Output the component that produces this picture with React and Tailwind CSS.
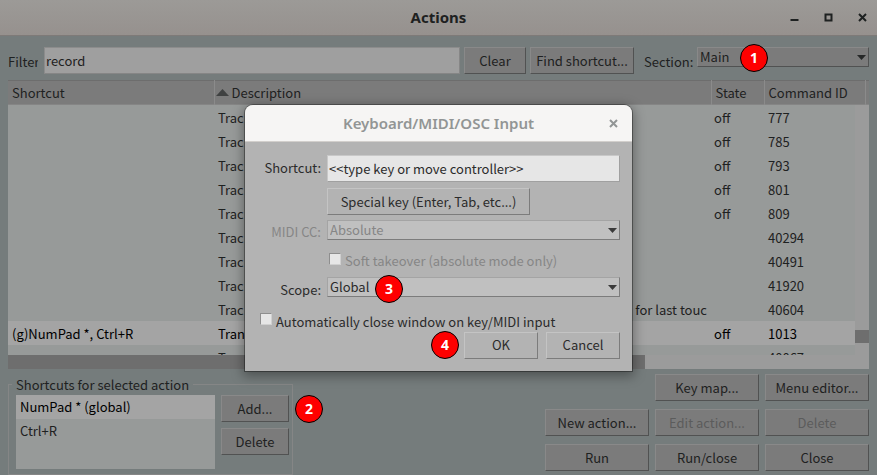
import React from "react";

const FACE =
  "border border-t-[#898989] border-l-[#898989] border-r-[#515252] border-b-[#515252] bg-[#7b7b7b]";

const ROWS = [
  { text: "Trac", state: "off", id: "777" },
  { text: "Trac", state: "off", id: "785" },
  { text: "Trac", state: "off", id: "793" },
  { text: "Trac", state: "off", id: "801" },
  { text: "Trac", state: "off", id: "809" },
  { text: "Trac", id: "40294" },
  { text: "Trac", id: "40491" },
  { text: "Trac", id: "41920" },
  { text: "Trac", tail: "for last touc", id: "40604" },
  { keys: "(g)NumPad *, Ctrl+R", text: "Tran", state: "off", id: "1013", selected: true },
  { text: "Trac", id: "40067" },
];

function Button({ children, className = "", disabled = false }) {
  return (
    <button
      type="button"
      disabled={disabled}
      className={`h-[27px] shrink-0 whitespace-nowrap ${FACE} ${disabled ? "text-[#5b5c5c]" : "text-[#1e2121]"} ${className}`}
    >
      {children}
    </button>
  );
}

function DialogButton({ children, className = "" }) {
  return (
    <button
      type="button"
      className={`h-[27px] whitespace-nowrap border border-t-[#c4c4c4] border-l-[#c4c4c4] border-r-[#7c7c7c] border-b-[#7c7c7c] bg-[#b3b3b3] text-[#2b2b2b] ${className}`}
    >
      {children}
    </button>
  );
}

function Arrow({ className }) {
  return (
    <svg className={`pointer-events-none absolute right-[3px] top-2 ${className}`} width="9" height="5" viewBox="0 0 9 5" aria-hidden="true">
      <path d="M0 0H9L4.5 5Z" fill="currentColor" />
    </svg>
  );
}

function Badge({ n, className = "" }) {
  return (
    <span
      className={`flex size-7 shrink-0 items-center justify-center rounded-full border border-black bg-[#fe0000] font-['Noto_Sans','Open_Sans',sans-serif] text-sm leading-none font-bold text-white ${className}`}
    >
      {n}
    </span>
  );
}

function DialogSelect({ id, value, disabled = false }) {
  return (
    <>
      <select
        id={id}
        disabled={disabled}
        className={`block h-5 w-full appearance-none border border-t-[#a4a4a4] border-l-[#a4a4a4] border-r-[#7c7c7c] border-b-[#7c7c7c] bg-[#c0c0c0] pl-[2px] leading-[18px] opacity-100 ${disabled ? "text-[#868686]" : "text-[#2b2b2b]"}`}
      >
        <option>{value}</option>
      </select>
      <Arrow className="text-[#3a3a3a]" />
    </>
  );
}

function Check({ id }) {
  return (
    <input
      id={id}
      type="checkbox"
      className="size-3 shrink-0 appearance-none border border-t-[#8e8e8e] border-l-[#8e8e8e] border-r-[#d0d0d0] border-b-[#d0d0d0] bg-[#e6e6e6]"
    />
  );
}

function InputDialog() {
  return (
    <div
      role="dialog"
      aria-labelledby="dialog-title"
      className="absolute inset-x-0 top-[105px] mx-auto w-[387px] rounded-t-lg bg-[#b3b3b3] text-[#2b2b2b] shadow-[0_0_0_1px_rgba(0,0,0,0.35),0_3px_12px_2px_rgba(0,0,0,0.35)]"
    >
      <header className="relative flex h-[37px] items-center justify-center rounded-t-lg border-b border-[#d2cfcc] bg-[#f6f5f4] font-['Noto_Sans','Open_Sans',sans-serif] text-[#929595]">
        <h2 id="dialog-title" className="text-[15px] font-semibold">
          Keyboard/MIDI/OSC Input
        </h2>
        <button type="button" aria-label="Close dialog" className="absolute right-[14px]">
          <svg width="9" height="9" viewBox="0 0 9 9" aria-hidden="true">
            <path d="M1 1L8 8M8 1L1 8" stroke="currentColor" strokeWidth="2" />
          </svg>
        </button>
      </header>
      <div className="px-3 pt-[13px] pb-3">
        <div className="flex">
          <label htmlFor="shortcut" className="w-16 pt-[3px] text-right leading-5">
            Shortcut:
          </label>
          <input
            id="shortcut"
            defaultValue="<<type key or move controller>>"
            className="ml-[6px] h-[27px] min-w-0 flex-1 border border-t-[#c8c8c8] border-l-[#c8c8c8] border-r-[#a0a0a0] border-b-[#a0a0a0] bg-[#e6e6e6] px-px"
          />
        </div>
        <DialogButton className="mt-[6px] ml-[70px] block w-[203px]">Special key (Enter, Tab, etc...)</DialogButton>
        <div className="mt-[5px] flex">
          <label htmlFor="midi-cc" className="h-5 w-16 pt-[2px] text-right leading-5 text-[#868686]">
            MIDI CC:
          </label>
          <div className="relative ml-[6px] flex-1">
            <DialogSelect id="midi-cc" value="Absolute" disabled />
          </div>
        </div>
        <div className="mt-[13px] ml-[72px] flex h-5 gap-1 text-[#868686]">
          <Check id="soft" />
          <label htmlFor="soft" className="leading-4">
            Soft takeover (absolute mode only)
          </label>
        </div>
        <div className="mt-1 flex">
          <label htmlFor="scope" className="h-5 w-16 overflow-hidden pt-[3px] text-right leading-5">
            Scope:
          </label>
          <div className="relative ml-[6px] flex-1">
            <DialogSelect id="scope" value="Global" />
            <Badge n="3" className="absolute -top-[2px] left-[48px]" />
          </div>
        </div>
        <div className="mt-4 ml-[3px] flex h-[18px] gap-1">
          <Check id="auto-close" />
          <label htmlFor="auto-close" className="leading-[18px]">
            Automatically close window on key/MIDI input
          </label>
        </div>
        <div className="flex items-center justify-end gap-2">
          <Badge n="4" className="-mr-[3px]" />
          <DialogButton className="w-[74px]">OK</DialogButton>
          <DialogButton className="w-[74px]">Cancel</DialogButton>
        </div>
      </div>
    </div>
  );
}

export default function App() {
  return (
    <div className="relative flex h-screen flex-col overflow-hidden bg-[#757c7c] font-['Noto_Sans_CJK_SC',sans-serif] text-[13px] text-[#1e2121]">
      <header className="relative flex h-9 shrink-0 items-center justify-center border-b border-[#7e7a78] bg-linear-to-b from-[#9c9a97] to-[#96918e]">
        <h1 className="font-['Noto_Sans','Open_Sans',sans-serif] text-[15px] font-bold">Actions</h1>
        <div className="absolute right-[10px] flex items-center gap-[25px]">
          <button type="button" aria-label="Minimize">
            <svg width="9" height="9" viewBox="0 0 9 9" aria-hidden="true">
              <path d="M0.5 7H8.5" stroke="currentColor" strokeWidth="2" />
            </svg>
          </button>
          <button type="button" aria-label="Maximize">
            <svg width="9" height="9" viewBox="0 0 9 9" aria-hidden="true">
              <path d="M0.5 0.5H8.5V8.5H0.5Z M2.5 2.5V6.5H6.5V2.5Z" fill="currentColor" fillRule="evenodd" />
            </svg>
          </button>
          <button type="button" aria-label="Close window">
            <svg width="9" height="9" viewBox="0 0 9 9" aria-hidden="true">
              <path d="M1 1L8 8M8 1L1 8" stroke="currentColor" strokeWidth="2" />
            </svg>
          </button>
        </div>
      </header>

      <main className="flex min-h-0 flex-1 flex-col px-2 pt-[11px]">
        <div className="flex shrink-0">
          <label htmlFor="filter" className="w-[30px] overflow-hidden pt-[5px] leading-5 whitespace-nowrap">
            Filter:
          </label>
          <input
            id="filter"
            defaultValue="record"
            className="ml-[6px] h-[27px] min-w-0 flex-1 border border-t-[#8c8c8c] border-l-[#8c8c8c] border-r-[#868686] border-b-[#868686] bg-[#9f9f9f] px-px"
          />
          <Button className="ml-1 w-[62px]">Clear</Button>
          <Button className="ml-1 w-[104px]">Find shortcut...</Button>
          <label htmlFor="section" className="ml-[10px] w-[53px] pt-[5px] leading-5">
            Section:
          </label>
          <div className="relative w-[172px]">
            <select id="section" className={`block h-5 w-full appearance-none pl-[2px] leading-[18px] ${FACE}`}>
              <option>Main</option>
            </select>
            <Arrow className="text-[#262828]" />
            <Badge n="1" className="absolute -top-[3px] left-[43px]" />
          </div>
        </div>

        <div className="relative mt-[6px] min-h-0 flex-1 overflow-hidden bg-[#979a99]">
          <table className="w-full table-fixed border-collapse text-left">
            <colgroup>
              <col className="w-[206px]" />
              <col />
              <col className="w-[53px]" />
              <col className="w-[101px]" />
              <col className="w-1" />
            </colgroup>
            <thead className="bg-[#7b7b7b]">
              <tr className="h-[25px] leading-5 shadow-[inset_0_1px_0_#6d6d6d,inset_0_-1px_0_#858585]">
                <th className="border-r border-[#8b8b8b] p-0 pl-1 font-normal">Shortcut</th>
                <th className="border-r border-[#8b8b8b] p-0 pl-px font-normal">
                  <span className="flex items-center gap-[3px]">
                    <svg width="13" height="7" viewBox="0 0 13 7" aria-hidden="true">
                      <path d="M0 7L6.500 0L13 7Z" fill="#3f4141" />
                    </svg>
                    Description
                  </span>
                </th>
                <th className="border-r border-[#8b8b8b] p-0 pl-1 font-normal">State</th>
                <th className="border-r border-[#8b8b8b] p-0 pl-1 font-normal">Command ID</th>
                <th className="p-0" />
              </tr>
            </thead>
            <tbody>
              {ROWS.map((row) => (
                <tr key={row.id} className={`h-6 leading-5 ${row.selected ? "bg-[#a4a4a4] text-black" : ""}`}>
                  <td className="p-0 pt-[2px] pl-1">{row.keys}</td>
                  <td className="p-0 pt-[2px] pr-1 pl-1">
                    <span className="flex justify-between">
                      <span>{row.text}</span>
                      {row.tail && <span>{row.tail}</span>}
                    </span>
                  </td>
                  <td className="p-0 pt-[2px] pl-[3px]">{row.state}</td>
                  <td className="p-0 pt-[2px] pl-1">{row.id}</td>
                  <td className="p-0" />
                </tr>
              ))}
            </tbody>
          </table>
          <div className="absolute top-[25px] right-0 bottom-0 flex w-[14px] flex-col justify-end bg-[#9b9b9b] pb-[26px]">
            <div className="h-[13px] bg-[#6e6e6e]" />
          </div>
          <div className="absolute inset-x-0 bottom-0 h-[14px] bg-[#9b9b9b]">
            <div className="h-full w-[74%] bg-[#6e6e6e]" />
          </div>
        </div>

        <div className="flex shrink-0 items-start pt-[5px]">
          <fieldset className="h-[101px] w-[285px] shrink-0 border border-[#858686] px-[7px]">
            <legend className="-ml-1 px-1 leading-[21px]">Shortcuts for selected action</legend>
            <div className="flex gap-[6px]">
              <ul className="h-[74px] flex-1 bg-[#979a99] leading-6">
                <li className="bg-[#a4a4a4] pl-1 text-black">NumPad * (global)</li>
                <li className="pl-1">Ctrl+R</li>
              </ul>
              <div className="-mr-1 flex flex-col gap-[6px]">
                <Button className="w-[68px]">Add...</Button>
                <Button className="w-[68px]">Delete</Button>
              </div>
            </div>
          </fieldset>
          <Badge n="2" className="mt-[21px] ml-[2px]" />
          <div className="ml-auto grid grid-cols-3 gap-x-[6px] gap-y-2">
            <Button className="col-start-2 w-[104px]">Key map...</Button>
            <Button className="w-[104px]">Menu editor...</Button>
            <Button className="w-[104px]">New action...</Button>
            <Button className="w-[104px]" disabled>
              Edit action...
            </Button>
            <Button className="w-[104px]" disabled>
              Delete
            </Button>
            <Button className="w-[104px]">Run</Button>
            <Button className="w-[104px]">Run/close</Button>
            <Button className="w-[104px]">Close</Button>
          </div>
        </div>
      </main>

      <InputDialog />
    </div>
  );
}
